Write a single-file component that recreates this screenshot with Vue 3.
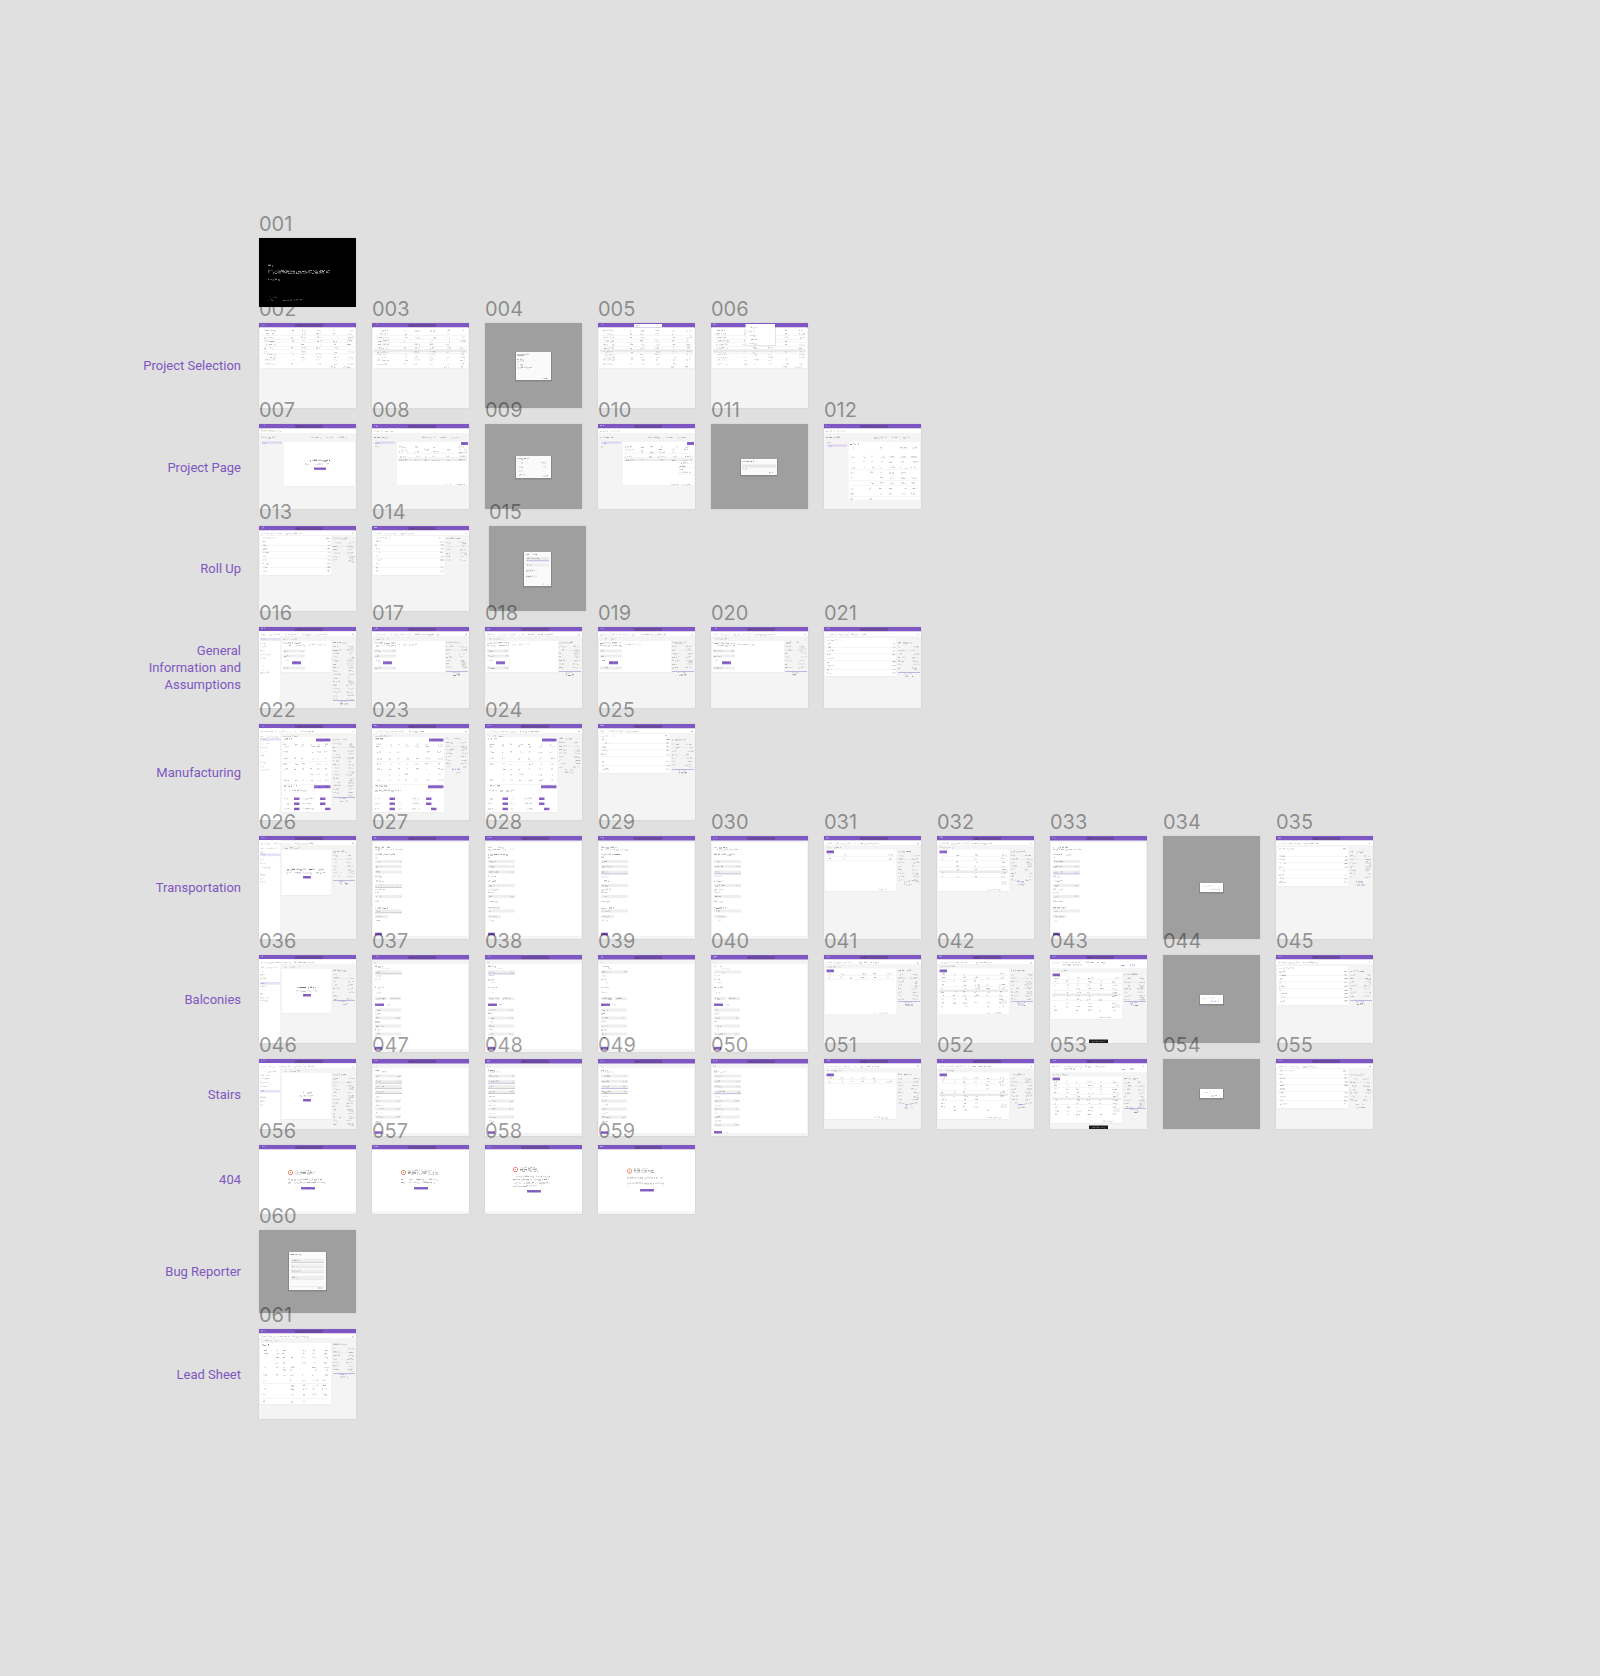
<script setup>
const PURPLE = '#7e57c2'
const PAGE = '#f4f4f4'
const INK = '#555'

// Small repeatable generator, so that every thumbnail keeps its own texture.
function seeded(seed) {
  let s = seed * 7919 + 13
  return () => {
    s = (s * 1103515245 + 12345) % 2147483648
    return s / 2147483648
  }
}

function artboard(id, h, draw, opts = {}) {
  const rnd = seeded(Number(id))
  const shapes = []
  const rect = (x, y, w, height, fill, o = 1) =>
    shapes.push({ d: `M${x} ${y}h${w}v${height}h${-w}z`, fill, o })
  // A run of text reduced to specks.
  const text = (x, y, w, fill = INK, o = 0.4) => {
    let faint = ''
    let strong = ''
    for (let p = 0; p < w; ) {
      const len = Math.min(w - p, 1 + Math.floor(rnd() * 3))
      const r = rnd()
      const top = (y + Math.floor(rnd() * 3) / 3 - 0.3).toFixed(1)
      const bit = `M${(x + p).toFixed(1)} ${top}h${len.toFixed(1)}v1h${(-len).toFixed(1)}z`
      if (r > 0.6) strong += bit
      else if (r > 0.15) faint += bit
      p += len + (r > 0.7 ? 1 : 0)
    }
    if (faint) shapes.push({ d: faint, fill, o: o * 0.5 })
    if (strong) shapes.push({ d: strong, fill, o })
  }
  const k = {
    h, rect, text, rnd,
    panel(x, y, x2, y2, fill = '#fff') {
      rect(x, y + 0.5, x2 - x, y2 - y, '#000', 0.05)
      rect(x, y, x2 - x, y2 - y, fill)
    },
    bar(search = '#6a4a9f') {
      rect(0, 0, 97, h, PAGE)
      rect(0, 0, 97, 4.5, PURPLE)
      rect(36, 1, 28, 3, search)
      text(2, 1, 4, '#fff', 0.5)
      text(38, 2, 4, '#222', 0.3)
    },
    crumbs(w = 50) {
      rect(0, 4.5, 97, 4.5, '#fff')
      text(2, 7, w * 0.6, INK, 0.25)
      text(2 + w * 0.66, 7, w * 0.4, INK, 0.4)
      text(93, 7, 2, INK, 0.4)
    },
    cells(cols, ys, o = 0.4) {
      ys.forEach((y) => cols.forEach(([x, w]) => {
        if (rnd() > 0.08) text(x + Math.floor(rnd() * 2), y, Math.max(2, w - Math.floor(rnd() * 3)), INK, o)
      }))
    },
    rules(x, x2, ys) {
      ys.forEach((y) => rect(x, y, x2 - x, 0.5, '#000', 0.08))
    },
    band(x, x2, y) {
      rect(x, y, x2 - x, 2.5, '#000', 0.08)
    },
    summary(from, to, foot = 'line') {
      text(74, from, 14, INK, 0.45)
      for (let y = from + 4; y < to; y += 3.5) {
        text(74, y, 3 + rnd() * 5, INK, 0.35)
        text(87 + rnd() * 3, y, 6, INK, 0.35)
        if (rnd() > 0.7) text(90, y + 1.5, 5, INK, 0.3)
      }
      rect(74, from + 8, 22, 0.5, '#000', 0.06)
      if (foot === 'line') {
        rect(74, to + 1, 22, 0.8, PURPLE, 0.5)
        text(80, to + 2, 8, PURPLE, 0.4)
        text(81, to + 4.5, 8, INK, 0.6)
      } else if (foot === 'text') {
        text(80, to + 1, 8, PURPLE, 0.6)
        text(80, to + 4, 9, INK, 0.4)
      }
    },
    sidebar(active) {
      rect(0, 4.5, 22, h - 4.5, '#e9e9e9')
      rect(0, 4.5, 21.5, h - 4.5, '#fff')
      text(2, 12, 17, INK, 0.25)
      ;[16, 19, 23, 27, 31, 38, 42, 45].forEach((y) => text(1, y, 3 + rnd() * 8, INK, 0.3))
      rect(1, active, 20.5, 2.6, '#e9e0f6')
      text(2, active + 0.5, 5, PURPLE, 0.4)
    },
    button(x, y, w, height = 2.8) {
      rect(x, y, w, height, PURPLE, 0.9)
      text(x + 1, y + 0.8, w - 2, '#4a2a92', 0.4)
    },
    field(x, y, w, mark = '') {
      rect(x, y, w, 3, '#eee')
      if (mark === 'focus') rect(x, y + 3, w, 0.8, PURPLE, 0.5)
      if (mark === 'dark') rect(x, y + 3, w, 0.7, '#888', 0.6)
      text(x + 1, y + 1, 4 + rnd() * 6)
      if (rnd() > 0.5) text(x + w - 5, y + 1, 4, INK, 0.25)
    }
  }
  draw(k)
  return { id, h, shapes, ...opts }
}

const cover = (k) => {
  k.rect(0, 0, 97, k.h, '#000')
  k.text(9, 27, 6, '#fff', 0.7)
  k.text(9, 32, 62, '#fff', 0.5)
  k.text(9, 33.3, 62, '#fff', 0.7)
  k.text(9, 34.6, 62, '#fff', 0.5)
  k.text(9, 41, 13, '#fff', 0.6)
  k.text(10, 59, 9, '#fff', 0.3)
  k.text(9, 61.5, 34, '#fff', 0.35)
}

const listCols = [[5, 12], [32, 3], [42, 5], [57, 6], [74, 4], [88, 6]]
const projectList = (variant) => (k) => {
  k.bar(variant === 'search' || variant === 'menu' ? '#fff' : undefined)
  k.panel(1, 4.5, 96, 45)
  k.cells(listCols, [7, 10.5, 14, 17.5, 21, 24.5], 0.4)
  k.cells(listCols, [28.5, 31, 34, 36.5, 40.5], 0.3)
  k.rules(2, 95, [12.5, 16, 19.5, 23, 26.5, 30])
  k.text(72, 43.5, 5)
  k.text(84, 43.5, 7)
  if (variant) k.band(2, 95, 26.8)
  if (variant === 'menu') {
    k.rect(34, 2, 31, 21, '#000', 0.1)
    k.rect(34.5, 1, 29.5, 21, '#fff')
    ;[4, 8, 12, 16, 20].forEach((y) => k.text(36 + k.rnd() * 4, y, 7, INK, 0.4))
  }
}

const dialog = (x, y, x2, y2, kind) => (k) => {
  k.rect(0, 0, 97, k.h, '#9f9f9f')
  k.rect(x - 1, y, x2 - x + 2, y2 - y + 1.5, '#000', 0.14)
  k.rect(x, y, x2 - x, y2 - y, kind === 'alert' ? '#fff' : '#fafafa')
  if (kind === 'alert') {
    k.text(x + 2, y + 2.5, 12, INK, 0.2)
    k.text(x + 11, y + 6, 9, PURPLE, 0.45)
    return
  }
  k.text(x + 1, y + 2, 12, INK, 0.6)
  k.text(x2 - 8, y2 - 2.5, 5, PURPLE, 0.5)
  if (kind === 'filter') {
    k.rect(x + 2, y + 5, x2 - x - 4, 3.5, '#eaeaea')
    k.text(x + 3, y + 6, 13)
    k.rect(x + 2, y + 8.5, x2 - x - 4, 0.7, PURPLE, 0.6)
    k.rect(x + 2, y + 11.5, x2 - x - 4, 3, '#eee')
    k.text(x + 3, y + 12.5, 5)
    ;[17, 23].forEach((d) => {
      k.rect(x + 2, y + d, 11, 3, '#f0f0f0')
      k.text(x + 2, y + d + 1, 7)
    })
  } else if (kind === 'bug') {
    ;[7, 12.5, 17.5, 24].forEach((d, i) => {
      k.rect(x + 2, y + d, x2 - x - 4, 3, '#eee')
      k.rect(x + 2, y + d + 3, x2 - x - 4, 0.5, '#999', i ? 0.3 : 0.8)
      k.text(x + 3, y + d + 1, 5 + k.rnd() * 5)
    })
    k.rect(x + 1, y2 - 4, x2 - x - 2, 0.5, '#ddd')
  } else if (kind === 'strip') {
    k.rect(x + 1, y + 5.5, x2 - x - 2, 3, '#e6e6e6')
    k.text(x + 2, y + 9, 7, INK, 0.3)
  } else if (kind === 'pair') {
    ;[6, 10.5, 14, 18].forEach((d, i) => k.text(x + 2 + (i % 2), y + d, 6))
    k.text(x + 24, y + 6, 7)
    k.text(x + 24, y + 10.5, 6)
  } else {
    ;[3, 7, 8.5, 12].forEach((d) => k.text(x + 1, y + d, 7))
    k.text(x + 2, y + 15, 14, INK, 0.6)
  }
}

const projectPage = (variant) => (k) => {
  k.bar()
  k.rect(0, 4.5, 97, 4.5, '#fff')
  k.text(2, 6.5, 20, INK, 0.3)
  k.text(2, 13, 14, INK, 0.5)
  k.text(50, 13, 13, INK, 0.4)
  k.text(68, 13, 7, INK, 0.4)
  k.text(79, 13, 9, INK, 0.4)
  const wide = variant === 'report'
  k.rect(3, wide ? 20.5 : 17.5, 20, 2.2, '#e0d5f1')
  k.text(3, wide ? 21.5 : 18.5, 5, PURPLE, 0.5)
  k.text(3, wide ? 18 : 22, 4, INK, 0.3)
  if (variant === 'empty') {
    k.panel(25, 18, 96, 62)
    k.text(51, 36, 20, '#222', 0.7)
    k.text(46, 39.5, 25)
    k.button(55, 43.5, 12, 2.4)
  } else if (wide) {
    k.panel(24.5, 18, 96, 76.5)
    k.text(26, 19.5, 9, INK, 0.7)
    k.cells([[26, 5], [39, 3], [47, 3], [56, 4], [65, 5], [76, 7], [87, 7]], [23.5, 32.5, 37.5, 43], 0.4)
    k.cells([[26, 4], [45, 4], [55, 4], [65, 5], [77, 6], [87, 6]], [48, 53.5, 58.5, 64, 69, 74.5], 0.4)
    k.rules(26, 95, [45.5, 56.5, 61.5, 72])
  } else {
    k.panel(25, 18, 96, 61.5)
    k.button(89, 18, 7, 3)
    k.cells([[27, 9], [43, 4], [51, 5], [60, 7], [74, 5], [86, 8]], [22.5, 25, 27.5, 32, 35.5], 0.4)
    k.rules(26, 95, [29.5, 33.5])
    k.band(26, 95, 34.5)
    k.text(72, 60, 8, INK, 0.3)
    k.text(84, 60, 9, INK, 0.3)
    if (variant === 'menu') {
      k.rect(80, 39, 16, 11, '#fff')
      k.rules(80, 96, [39, 43, 50])
      k.text(83, 38.5, 7)
      k.text(81, 42, 7, INK, 0.6)
      k.text(81, 45, 4)
      k.text(81, 48, 14, INK, 0.3)
    }
  }
}

const ledger = (x, y, x2, y2, foot, deep) => (k) => {
  k.bar()
  k.crumbs(38)
  k.panel(x, y, x2, y2)
  k.text(x + 2, y + 1.5, 15, INK, 0.3)
  k.text(x2 - 5, y + 1.5, 3)
  for (let row = y + 5; row < y2 - 1; row += 3.7) {
    k.text(x + 2 + Math.floor(k.rnd() * 2), row, 2 + k.rnd() * 5, INK, 0.4)
    k.text(x2 - 3.5, row, 3, INK, 0.5)
  }
  k.rules(x, x2, [y + 9, y + 15.5, y + 22, y + 31])
  k.summary(deep ? 12 : 15.5, deep ? 34 : 44, foot)
}

const general = (side) => (k) => {
  k.bar()
  k.crumbs(62)
  k.text(side ? 24 : 4, 11.5, 14, INK, 0.3)
  if (side) {
    k.sidebar(11)
    k.crumbs(62)
  }
  const x = side ? 23 : 1
  k.panel(x, 14, side ? 72 : 73, 45)
  k.text(x + 1, 15.5, 22, INK, 0.5)
  k.text(x + 1, 18, 22, INK, 0.4)
  k.text(x + 26, 17, 18, INK, 0.3)
  ;[22.5, 27.5, 39.5].forEach((y) => k.field(x + 1, y, 22))
  k.text(x + 3, 33, 4)
  k.button(x + 10, 34.3, 9, 3)
  if (side) k.summary(15, 72)
  else k.summary(15, 43)
}

const manufacturing = (side) => (k) => {
  k.bar()
  k.crumbs(50)
  k.text(side ? 24 : 3, 11.5, 16, INK, 0.35)
  if (side) {
    k.sidebar(14)
    k.crumbs(50)
  }
  const x = side ? 23 : 1
  k.panel(x, 13, 72, 88)
  k.text(x + 2, 14.5, 9, INK, 0.7)
  k.button(57, 14.5, 14.5, 3)
  const cols = side
    ? [[24, 6], [35, 3], [42, 3], [51, 4], [58, 4], [65, 5]]
    : [[4, 5], [17, 3], [25, 3], [33, 4], [43, 4], [53, 5], [65, 5]]
  k.cells(cols, [20, 22, 27.5, 34, 39.5, 44.5, 50, 55.5], 0.38)
  k.rules(x + 1, 71, [37, 60])
  k.text(x + 2, 61.5, 13, INK, 0.6)
  k.text(x + 2, 66, 26, INK, 0.5)
  k.button(side ? 55 : 56, 61.3, side ? 16.5 : 15.5, 3)
  const left = side ? 35 : 17.5
  const right = side ? 61 : 54
  ;[73.5, 78.5, 83.7].forEach((y, i) => {
    k.text(x + 2, y + 0.5, 5)
    k.button(left, y, 5.5, 2.5)
    k.text(left + 8, y + 0.5, 4, INK, 0.25)
    k.text(right - 14, y + 0.5, 8, INK, 0.35)
    k.button(right + (i === 2 ? 5 : 0), y, 5.5, 2.5)
  })
  if (side) k.summary(15, 72)
  else k.summary(14, 44, 'text')
}

const welcome = (active, bottom, mid) => (k) => {
  k.bar()
  k.crumbs(50)
  k.text(25, 11.5, 16, INK, 0.35)
  k.sidebar(active)
  k.crumbs(50)
  k.panel(23, 14, 72, bottom)
  k.text(mid.x, mid.y, mid.w, '#222', 0.65)
  k.text(mid.x - 1, mid.y + 3.3, mid.w + 2)
  k.button(44, mid.y + 7, 8, 2.5)
  k.summary(15, mid.end, mid.end > 60 ? 'none' : 'line')
}

const formShell = (k) => {
  k.bar()
  k.rect(1, 9, 95, k.h - 12, '#fff')
  k.text(2, 7, 4, INK, 0.2)
}

const transportForm = (variant) => (k) => {
  formShell(k)
  k.rect(1, 6.5, 95, k.h - 9.5, '#fff')
  k.text(3, 11, 16, INK, 0.6)
  k.text(3, 13, 28, INK, 0.35)
  k.text(3, 18, 21, INK, 0.6)
  k.text(3, 21, 3)
  const focus = variant > 1 ? 'focus' : ''
  k.field(3, 24, 27)
  k.field(3, 29, 27)
  k.field(3, 34.5, 27, focus)
  k.text(3, 40, 8, focus ? PURPLE : INK, 0.4)
  k.text(3, 44.5, 9, INK, 0.5)
  k.field(3, 48, 27, variant === 0 ? 'dark' : '')
  k.text(3, 53, 10, INK, 0.35)
  k.text(3, 56, 6, INK, 0.35)
  k.field(3, 59, 27)
  k.text(3, 65, 10, INK, 0.35)
  k.text(3, 71.5, 13, INK, 0.6)
  k.field(3, 73.5, 27, variant === 0 ? 'dark' : '')
  k.field(3, 79, 13)
  k.text(4, 84, 6, INK, 0.35)
  if (variant < 3) k.button(3, 96.7, 7, 2.8)
}

const balconyForm = (mark) => (k) => {
  formShell(k)
  k.text(3, 11, 8, INK, 0.55)
  k.text(10, 13, 8, INK, 0.2)
  k.field(3, 15.5, 27, mark)
  k.text(4, 20, 5, INK, 0.3)
  k.text(3, 24, 2, PURPLE, 0.6)
  k.text(6, 24, 3, INK, 0.4)
  k.text(6, 27, 4, INK, 0.2)
  k.text(3, 32, 2, PURPLE, 0.6)
  k.text(6, 32, 6, INK, 0.45)
  k.text(4, 37, 5, INK, 0.3)
  k.field(3, 42, 12)
  k.field(17, 42, 12)
  k.button(3, 48.5, 9, 2.5)
  k.text(14, 49, 4, INK, 0.3)
  ;[53.5, 61.5, 69.5, 77.5].forEach((y) => {
    k.field(3, y, 26)
    k.text(3, y + 4.5, 5, INK, 0.5)
  })
  k.button(3, 91.8, 7, 2.8)
}

const stairForm = (variant) => (k) => {
  formShell(k)
  k.text(3, 11, 7, INK, 0.6)
  k.text(3, 12.5, 13, INK, 0.35)
  ;[15.5, 20.8, 26, 31.3].forEach((y, i) => k.field(3, y, 27, i === 0 ? '' : i === variant ? 'focus' : i > variant ? 'dark' : ''))
  k.text(4, 37, 6, INK, 0.3)
  ;[40.5, 48.5, 56.5].forEach((y) => {
    k.field(3, y, 26)
    k.text(4, y + 5, 6, INK, 0.3)
  })
  if (variant > 2) {
    k.field(3, 64.5, 26)
    k.button(3, 72, 8, 2.5)
    k.text(14, 72.5, 3, INK, 0.3)
  } else {
    k.text(3, 63, 6, INK, 0.5)
    k.button(3, 72.3, 7, 2.5)
  }
}

const records = (o) => (k) => {
  const s = o.toast ? 4 : 0
  k.bar()
  k.crumbs(50)
  if (s) {
    k.rect(0, 9, 97, 4, '#fff')
    k.text(12, 9.5, 20, INK, 0.5)
    k.text(71, 9.5, 4, PURPLE, 0.6)
    k.text(80, 9.5, 5, PURPLE, 0.6)
  }
  k.text(3, 11 + s, 15, INK, 0.35)
  k.panel(1, 13.5 + s, 72, o.bottom)
  k.button(2.5, 14.5 + s, 7.5, 2.8)
  const cols = o.sparse ? [[4, 3], [19, 3], [37, 4], [64, 5]] : [[4, 4], [16, 3], [26, 4], [37, 5], [49, 4], [62, 6]]
  for (let i = 0; i < o.rows; i += 1) k.cells(cols, [18.5 + s + i * 3.6], 0.4)
  k.rules(2, 71, [20.5 + s, 24 + s])
  if (o.rows > 5) {
    k.rules(2, 71, [31 + s, 41 + s])
    k.band(2, 71, 34.5 + s)
    k.rect(64, 45 + s, 6, 4, '#efefef')
  }
  k.text(50, o.bottom - 2, 14, INK, 0.3)
  k.summary(15 + s, o.sideEnd, o.foot)
  if (o.toast) {
    k.rect(39, k.h - 3.5, 19, 3.5, '#1d1d1d')
    k.text(42, k.h - 2, 13, '#fff', 0.3)
  }
}

const notFound = (x, y, lines) => (k) => {
  k.bar()
  k.rect(0, 4.5, 97, k.h - 7, '#fff')
  // Round warning mark: four sides and a dot.
  k.rect(x + 1, y, 3, 1, '#f0442e', 0.6)
  k.rect(x, y + 1, 1, 3, '#f0442e', 0.6)
  k.rect(x + 1, y + 4, 3, 1, '#f0442e', 0.7)
  k.rect(x + 4, y + 1, 1, 3, '#f0442e', 0.6)
  k.rect(x + 2, y + 2, 1, 1, '#f0442e', 0.7)
  k.text(x + 7, y, lines.w * 0.8, INK, 0.4)
  k.text(x + 7, y + 1.7, lines.w, INK, 0.6)
  k.text(x + 7, y + 3.4, lines.w, INK, 0.5)
  for (let i = 0; i < lines.n; i += 1) k.text(x, y + 9 + i * lines.step, i === 3 ? 24 : 37, INK, 0.5)
  k.button(lines.b, lines.by, 14, 2.5)
}

const leadSheet = (k) => {
  k.bar()
  k.crumbs(48)
  k.text(3, 11, 16, INK, 0.35)
  k.panel(1, 14, 72, 75)
  k.text(3, 15.5, 9, '#222', 0.8)
  k.cells([[4, 5], [16, 3], [23, 3], [31, 4], [43, 4], [53, 5], [65, 5]], [21, 24, 28, 33.5, 38, 40.5, 45.5], 0.4)
  k.cells([[4, 4], [31, 4], [43, 4], [53, 5], [63, 6]], [51, 56, 59.5, 65, 72], 0.45)
  k.rules(2, 71, [54, 69.5])
  k.summary(15, 43)
}

const series = (from, h, draws) =>
  draws.map((d, i) => artboard(String(from + i).padStart(3, '0'), d.h ?? h, d.draw ?? d, d.opts))
const tall = (draw, h) => ({ draw, h })

const intro = { x: 28, y: 33, w: 38, end: 43 }
const flows = [
  { name: '', h: 69, boards: series(1, 69, [cover]) },
  {
    name: 'Project Selection', h: 85,
    boards: series(2, 85, [projectList(), projectList('hover'), dialog(31, 29, 66, 57, 'plain'), projectList('search'), projectList('menu')])
  },
  {
    name: 'Project Page', h: 86,
    boards: series(7, 85, [projectPage('empty'), projectPage('table'), dialog(31, 32, 66, 54, 'pair'), projectPage('menu'), dialog(30, 35, 66, 51, 'strip'), projectPage('report')])
  },
  {
    name: 'Roll Up', h: 85,
    boards: series(13, 85, [ledger(1, 10, 72, 49, 'none', true), ledger(1, 10, 72, 49, 'none', true), { draw: dialog(35, 26, 62, 60, 'filter'), opts: { nudged: true } }])
  },
  {
    name: 'General Information and Assumptions', h: 81,
    boards: series(16, 81, [general(true), general(), general(), general(), general(), ledger(1, 11, 72, 49, 'line')])
  },
  {
    name: 'Manufacturing', h: 96,
    boards: series(22, 96, [manufacturing(true), manufacturing(), manufacturing(), ledger(1, 10, 72, 49, 'line')])
  },
  {
    name: 'Transportation', h: 103,
    boards: series(26, 103, [
      welcome(17.5, 59, intro), transportForm(0), transportForm(1), transportForm(2), transportForm(3),
      records({ bottom: 55, rows: 2, sparse: true, sideEnd: 44, foot: 'text' }),
      records({ bottom: 55, rows: 7, sparse: true, sideEnd: 44, foot: 'text' }),
      transportForm(2), dialog(37, 47, 60, 56, 'alert'), ledger(1, 11, 72, 50, 'text')
    ])
  },
  {
    name: 'Balconies', h: 88,
    boards: series(36, 88, [
      welcome(27, 58, { x: 38, y: 32, w: 19, end: 44 }),
      tall(balconyForm('dark'), 97), tall(balconyForm('focus'), 97), tall(balconyForm(''), 97), tall(balconyForm(''), 97),
      records({ bottom: 59.5, rows: 2, sideEnd: 45 }),
      records({ bottom: 59.5, rows: 10, sideEnd: 45 }),
      records({ bottom: 64, rows: 10, sideEnd: 45, toast: true }),
      dialog(37, 40, 60, 49, 'alert'), ledger(1, 11, 72, 50, 'line')
    ])
  },
  {
    name: 'Stairs', h: 70,
    boards: series(46, 70, [
      welcome(31, 60, { x: 41, y: 33, w: 12, end: 68 }),
      tall(stairForm(0), 77), tall(stairForm(1), 77), tall(stairForm(2), 77), tall(stairForm(3), 77),
      records({ bottom: 60, rows: 2, sideEnd: 44, foot: 'text' }),
      records({ bottom: 60, rows: 10, sideEnd: 44, foot: 'text' }),
      records({ bottom: 64, rows: 10, sideEnd: 48, toast: true }),
      dialog(37, 30, 60, 39, 'alert'), ledger(1, 10, 72, 49, 'text')
    ])
  },
  {
    name: '404', h: 69,
    boards: series(56, 69, [
      notFound(29, 25, { w: 20, n: 2, step: 3, b: 42, by: 42 }),
      notFound(29, 25, { w: 30, n: 2, step: 3, b: 42, by: 42 }),
      notFound(28, 22, { w: 18, n: 4, step: 3.2, b: 42, by: 45 }),
      notFound(29, 23.5, { w: 20, n: 2, step: 5.3, b: 42, by: 44 })
    ])
  },
  { name: 'Bug Reporter', h: 83, boards: series(60, 83, [dialog(30, 22, 67, 60, 'bug')]) },
  { name: 'Lead Sheet', h: 90, boards: series(61, 90, [leadSheet]) }
]
</script>

<template>
  <main class="canvas">
    <section v-for="(flow, i) in flows" :key="i" class="flow" :class="{ front: i === 0 }" :style="{ height: flow.h + 'px' }">
      <h2 class="flow-name">{{ flow.name }}</h2>
      <div class="boards">
        <figure v-for="board in flow.boards" :key="board.id" class="board" :class="{ nudged: board.nudged }">
          <figcaption class="number">{{ board.id }}</figcaption>
          <svg class="thumb" :viewBox="`0 0 97 ${board.h}`" width="97" :height="board.h" aria-hidden="true">
            <path v-for="(s, n) in board.shapes" :key="n" :d="s.d" :fill="s.fill" :fill-opacity="s.o" />
          </svg>
        </figure>
      </div>
    </section>
  </main>
</template>

<style>
body {
  margin: 0;
  background: #e0e0e0;
}
</style>

<style scoped>
.canvas {
  box-sizing: border-box;
  min-height: 100vh;
  padding: 238px 0 240px 137px;
  display: flex;
  flex-direction: column;
  gap: 16px;
  background: #e0e0e0;
}

.flow {
  display: flex;
  align-items: center;
  gap: 18px;
}

.front {
  position: relative;
  z-index: 1;
}

.flow-name {
  flex: none;
  width: 104px;
  margin: 0;
  font: 400 13px/17px Roboto, sans-serif;
  color: #7e57c2;
  text-align: right;
}

.boards {
  align-self: flex-start;
  display: flex;
  align-items: flex-start;
  gap: 16px;
}

.board {
  position: relative;
  flex: none;
  width: 97px;
  margin: 0;
}

.nudged {
  left: 4px;
}

.thumb {
  display: block;
  box-shadow: 0 0 2px rgba(0, 0, 0, 0.1);
}

.number {
  position: absolute;
  left: 0;
  bottom: 100%;
  font: 400 20px/28px Inter, sans-serif;
  color: rgba(0, 0, 0, 0.4);
}
</style>
